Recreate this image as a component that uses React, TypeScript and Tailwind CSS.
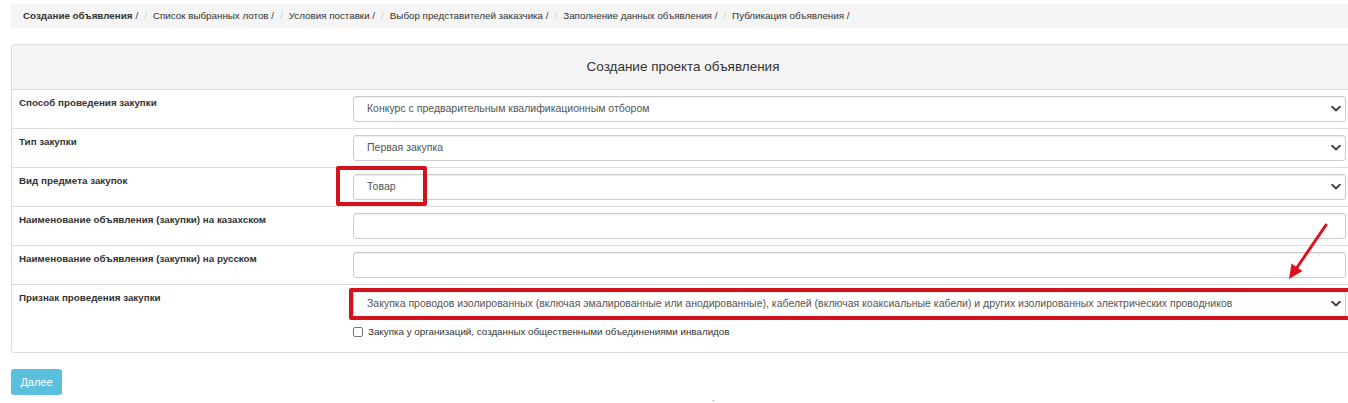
import React from "react";

const crumbs = [
  "Список выбранных лотов /",
  "Условия поставки /",
  "Выбор представителей заказчика /",
  "Заполнение данных объявления /",
  "Публикация объявления /",
];

function Chevron() {
  return (
    <svg width="10" height="7" viewBox="0 0 10 7" className="absolute right-[4px] top-1/2 -translate-y-1/2">
      <path d="M1.2 1.3 L5 5 L8.8 1.3" fill="none" stroke="#444" strokeWidth="2" strokeLinecap="round" strokeLinejoin="round" />
    </svg>
  );
}

function SelectBox({ value, boxed }: { value: string; boxed?: boolean }) {
  return (
    <div className="relative h-[26px] w-full rounded-[3px] border border-[#ccc] bg-white shadow-[inset_0_1px_1px_rgba(0,0,0,0.075)] flex items-center pl-[13px] text-[10.5px] text-[#555]">
      <span className="whitespace-nowrap">{value}</span>
      <Chevron />
      {boxed && (
        <div className="absolute -left-[5px] -top-[4px] -bottom-[4px] -right-[8px] border-[4px] border-[#d3131c] rounded-[2px] pointer-events-none" />
      )}
    </div>
  );
}

function InputBox() {
  return <div className="h-[26px] w-full rounded-[3px] border border-[#ccc] bg-white shadow-[inset_0_1px_1px_rgba(0,0,0,0.075)]" />;
}

function Row({ label, children, tall }: { label: string; children: React.ReactNode; tall?: boolean }) {
  return (
    <div className={`flex border-t border-[#ddd] ${tall ? "h-[68px]" : "h-[39px]"}`}>
      <div className="w-[341px] shrink-0 pl-[7px] pt-[5px] text-[9.8px] leading-[15px] font-bold text-[#333]">{label}</div>
      <div className="flex-1 pt-[6px] pr-[8px]">{children}</div>
    </div>
  );
}

export default function App() {
  return (
    <div
      className="relative w-[1348px] h-[403px] overflow-hidden bg-white"
      style={{ fontFamily: '"Liberation Sans", Arial, sans-serif' }}
    >
      <div className="mt-[4px] ml-[11px] h-[24px] bg-[#f5f5f5] flex items-center pl-[12px] text-[9.8px] text-[#333] whitespace-nowrap">
        <span className="font-bold">Создание объявления</span>
        <span className="ml-[3px]">/</span>
        {crumbs.map((c) => (
          <React.Fragment key={c}>
            <span className="px-[6px] text-[#ccc]">/</span>
            <span>{c}</span>
          </React.Fragment>
        ))}
      </div>

      <div className="mt-[16px] ml-[11px] w-[1344px] border border-[#ddd] rounded-[3px]">
        <div className="h-[44px] bg-[#f5f5f5] flex items-center justify-center text-[13.5px] text-[#333]">
          Создание проекта объявления
        </div>
        <Row label="Способ проведения закупки">
          <SelectBox value="Конкурс с предварительным квалификационным отбором" />
        </Row>
        <Row label="Тип закупки">
          <SelectBox value="Первая закупка" />
        </Row>
        <Row label="Вид предмета закупок">
          <div className="relative">
            <SelectBox value="Товар" />
            <div className="absolute -left-[17px] -top-[8px] w-[91px] h-[40px] border-[4px] border-[#d3131c] rounded-[2px] pointer-events-none" />
          </div>
        </Row>
        <Row label="Наименование объявления (закупки) на казахском">
          <InputBox />
        </Row>
        <Row label="Наименование объявления (закупки) на русском">
          <InputBox />
        </Row>
        <Row label="Признак проведения закупки" tall>
          <SelectBox
            boxed
            value="Закупка проводов изолированных (включая эмалированные или анодированные), кабелей (включая коаксиальные кабели) и других изолированных электрических проводников"
          />
          <div className="mt-[7px] flex items-center text-[9.8px] font-normal text-[#333] leading-[15px]">
            <span className="inline-block w-[10px] h-[10px] border border-[#767676] rounded-[2px] bg-white" />
            <span className="ml-[5px]">Закупка у организаций, созданных общественными объединениями инвалидов</span>
          </div>
        </Row>
      </div>

      <div className="mt-[16px] ml-[11px]">
        <button className="w-[51px] h-[26px] rounded-[3px] bg-[#5bc0de] text-white text-[11px]">Далее</button>
      </div>

      <svg className="absolute left-[1280px] top-[218px]" width="60" height="66" viewBox="0 0 60 66">
        <line x1="46" y1="7" x2="17" y2="49.5" stroke="#d9141e" strokeWidth="3" strokeLinecap="round" />
        <polygon points="9,61 22.5,53 11.5,45.5" fill="#d9141e" />
      </svg>
      <div className="absolute left-[713px] top-[400px] w-[1px] h-[1px] bg-[#888]" />
    </div>
  );
}
